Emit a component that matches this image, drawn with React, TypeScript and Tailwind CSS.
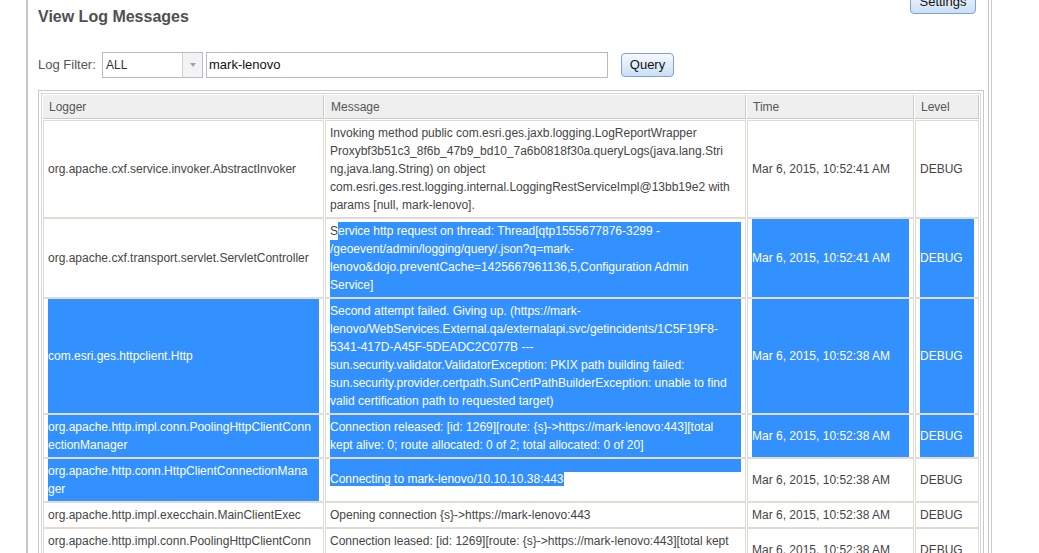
import React from "react";

type Sel = "none" | "full" | "start" | "end";

interface Cell {
  lines: string[];
  sel?: Sel;
}

const T41 = "Mar 6, 2015, 10:52:41 AM";
const T38 = "Mar 6, 2015, 10:52:38 AM";

const rows: Cell[][] = [
  [
    { lines: ["org.apache.cxf.service.invoker.AbstractInvoker"] },
    {
      lines: [
        "Invoking method public com.esri.ges.jaxb.logging.LogReportWrapper",
        "Proxybf3b51c3_8f6b_47b9_bd10_7a6b0818f30a.queryLogs(java.lang.Stri",
        "ng,java.lang.String) on object",
        "com.esri.ges.rest.logging.internal.LoggingRestServiceImpl@13bb19e2 with",
        "params [null, mark-lenovo].",
      ],
    },
    { lines: [T41] },
    { lines: ["DEBUG"] },
  ],
  [
    { lines: ["org.apache.cxf.transport.servlet.ServletController"] },
    {
      sel: "start",
      lines: [
        "Service http request on thread: Thread[qtp1555677876-3299 -",
        "/geoevent/admin/logging/query/.json?q=mark-",
        "lenovo&dojo.preventCache=1425667961136,5,Configuration Admin",
        "Service]",
      ],
    },
    { lines: [T41], sel: "full" },
    { lines: ["DEBUG"], sel: "full" },
  ],
  [
    { lines: ["com.esri.ges.httpclient.Http"], sel: "full" },
    {
      sel: "full",
      lines: [
        "Second attempt failed. Giving up. (https://mark-",
        "lenovo/WebServices.External.qa/externalapi.svc/getincidents/1C5F19F8-",
        "5341-417D-A45F-5DEADC2C077B ---",
        "sun.security.validator.ValidatorException: PKIX path building failed:",
        "sun.security.provider.certpath.SunCertPathBuilderException: unable to find",
        "valid certification path to requested target)",
      ],
    },
    { lines: [T38], sel: "full" },
    { lines: ["DEBUG"], sel: "full" },
  ],
  [
    { lines: ["org.apache.http.impl.conn.PoolingHttpClientConn", "ectionManager"], sel: "full" },
    {
      sel: "full",
      lines: [
        "Connection released: [id: 1269][route: {s}->https://mark-lenovo:443][total",
        "kept alive: 0; route allocated: 0 of 2; total allocated: 0 of 20]",
      ],
    },
    { lines: [T38], sel: "full" },
    { lines: ["DEBUG"], sel: "full" },
  ],
  [
    { lines: ["org.apache.http.conn.HttpClientConnectionMana", "ger"], sel: "full" },
    { lines: ["Connecting to mark-lenovo/10.10.10.38:443"], sel: "end" },
    { lines: [T38] },
    { lines: ["DEBUG"] },
  ],
  [
    { lines: ["org.apache.http.impl.execchain.MainClientExec"] },
    { lines: ["Opening connection {s}->https://mark-lenovo:443"] },
    { lines: [T38] },
    { lines: ["DEBUG"] },
  ],
  [
    { lines: ["org.apache.http.impl.conn.PoolingHttpClientConn", "ectionManager"] },
    {
      lines: [
        "Connection leased: [id: 1269][route: {s}->https://mark-lenovo:443][total kept",
        "alive: 0; route allocated: 1 of 2; total allocated: 1 of 20]",
      ],
    },
    { lines: [T38] },
    { lines: ["DEBUG"] },
  ],
];

function Lines({ lines }: { lines: string[] }) {
  return (
    <div>
      {lines.map((l, i) => (
        <div key={i} className="whitespace-nowrap">
          {l}
        </div>
      ))}
    </div>
  );
}

function LogCell({ cell }: { cell: Cell }) {
  const base = "border border-[#e2dbcf] px-[4px] overflow-hidden";

  if (cell.sel === "full") {
    return (
      <div className={`${base} flex`}>
        <div className="flex-1 flex items-center bg-[#3390ff] text-white py-[3px]">
          <Lines lines={cell.lines} />
        </div>
      </div>
    );
  }

  if (cell.sel === "start") {
    // selection begins after the first letter
    const [first, ...rest] = cell.lines;
    return (
      <div className={`${base} pt-[3px] flex`}>
        <div className="flex-1 bg-[#3390ff] text-white pb-[3px]">
          <div className="whitespace-nowrap">
            <span className="inline-block bg-white text-[#454545] align-top">{first[0]}</span>
            {first.slice(1)}
          </div>
          {rest.map((l, i) => (
            <div key={i} className="whitespace-nowrap">
              {l}
            </div>
          ))}
        </div>
      </div>
    );
  }

  if (cell.sel === "end") {
    // selection ends at the end of the text
    return (
      <div className={`${base} flex flex-col`}>
        <div className="flex-1 bg-[#3390ff] -mb-[2px]" />
        <div className="whitespace-nowrap">
          <span className="bg-[#3390ff] text-white">{cell.lines[0]}</span>
        </div>
        <div className="flex-1" />
      </div>
    );
  }

  return (
    <div className={`${base} py-[3px] flex items-center text-[#454545]`}>
      <Lines lines={cell.lines} />
    </div>
  );
}

function BlueButton({ label, className = "" }: { label: string; className?: string }) {
  return (
    <button
      className={`h-[24px] rounded-[4px] border border-[#7fa2c8] bg-linear-to-b from-[#f5f9fe] to-[#cadff6] text-[13px] text-[#111] flex items-center justify-center ${className}`}
    >
      {label}
    </button>
  );
}

export default function App() {
  const headers = ["Logger", "Message", "Time", "Level"];

  return (
    <div className="h-[553px] overflow-hidden bg-white font-['Liberation_Sans',Arial,sans-serif]">
      <div className="ml-[26px] w-[966px] border-r border-[#cacaca] pr-[2px]">
        <div className="min-h-[553px] border-l-2 border-r border-[#c6c6c6] pl-[10px] pr-[4px] pt-[7px]">
          {/* title */}
          <div className="flex h-5 items-start justify-between">
            <h2 className="text-[16px] font-bold leading-5 text-[#505050]">View Log Messages</h2>
            <BlueButton label="Settings" className="-mt-[17px] mr-[8px] w-[66px]" />
          </div>

          {/* filter */}
          <div className="mt-[25px] flex h-[26px] items-center">
            <span className="w-[64px] text-[13px] text-[#555]">Log Filter:</span>
            <div className="flex h-[26px] w-[101px] border border-[#b5bcc7]">
              <span className="flex flex-1 items-center pl-[3px] text-[12px] text-[#333]">ALL</span>
              <span className="flex w-[20px] items-center justify-center border-l border-[#cfd3d9] bg-[#f3f3f3]">
                <span className="h-0 w-0 border-l-[3px] border-r-[3px] border-t-[4px] border-l-transparent border-r-transparent border-t-[#98a4b4]" />
              </span>
            </div>
            <div className="ml-[3px] flex h-[26px] w-[402px] items-center border border-[#b5bcc7] px-[2px] text-[13px] text-[#111]">
              mark-lenovo
            </div>
            <BlueButton label="Query" className="ml-[13px] w-[53px]" />
          </div>

          {/* grid */}
          <div className="mt-[12px] w-[946px] border border-[#c8c8c8] p-[2px]">
            <div className="border border-[#d8d8d8] p-[1px]">
              <div className="grid grid-cols-[281px_421px_167px_64px] gap-x-[1px] text-[12px] leading-[18px]">
                {headers.map((h) => (
                  <div
                    key={h}
                    className="mb-[1px] flex h-[24px] items-center border-b border-r border-[#c9c9c9] bg-[#efefef] px-[6px] text-[#555]"
                  >
                    {h}
                  </div>
                ))}
                {rows.map((row, r) =>
                  row.map((cell, c) => <LogCell key={`${r}-${c}`} cell={cell} />)
                )}
              </div>
            </div>
          </div>
        </div>
      </div>
    </div>
  );
}
